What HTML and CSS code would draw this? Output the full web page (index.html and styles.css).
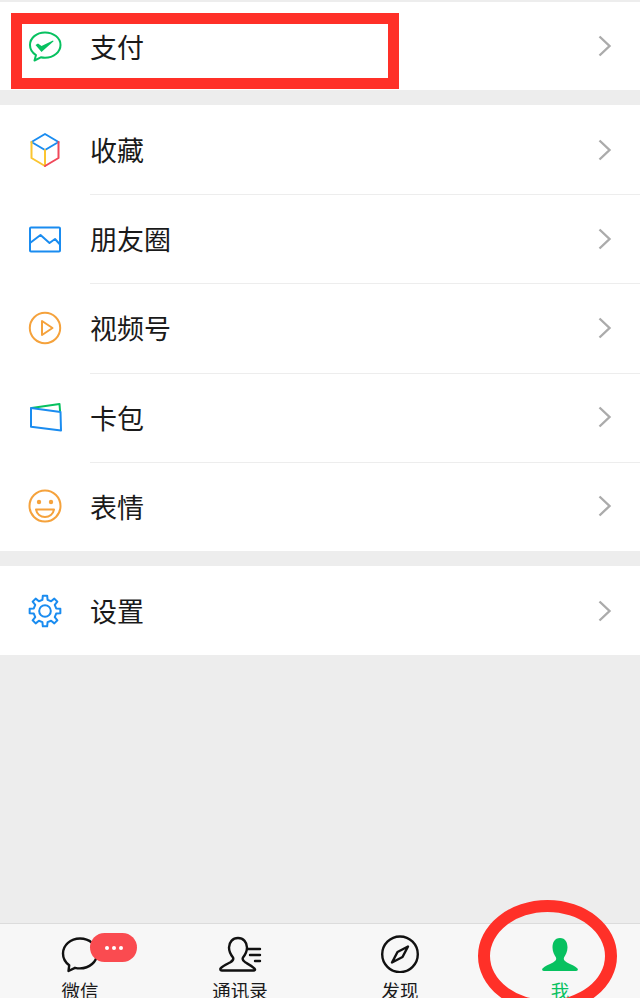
FILE: index.html
```html
<!DOCTYPE html>
<html lang="zh-CN">
<head>
  <meta charset="UTF-8" />
  <meta name="viewport" content="width=device-width, initial-scale=1.0"/>
  <title>我</title>
  <link rel="stylesheet" href="styles.css">
</head>
<body>
  <main class="content">
    <section class="group">
      <div class="row row-pay">
        <svg class="icon" viewBox="0 0 36 36">
          <path class="line green" d="M18 4.500C9.500 4.500 3 10 3 17c0 4.200 2.300 7.800 6 10.100L7.500 32.500l6.300-3.200c1.300.3 2.800.5 4.200.5 8.500 0 15.500-5.700 15.500-12.800S26.500 4.500 18 4.500Z"/>
          <path class="fill-green" d="M8.500 17l2.500-1.500 3.500 2.500L26 12.500l.6.700L14.500 24Z"/>
        </svg>
        <div class="row-body">
          <span>支付</span>
          <svg class="chevron" viewBox="0 0 16 24"><path d="M2.500 2.500l10 9.500-10 9.500"/></svg>
        </div>
      </div>
    </section>

    <section class="group">
      <div class="row">
        <svg class="icon" viewBox="0 0 36 36">
          <path class="line blue" d="M4.500 10L18 2l13.500 8L18 18Z"/>
          <path class="line yellow" d="M4.500 10v16L18 34V18"/>
          <path class="line red" d="M31.500 10v16L18 34"/>
        </svg>
        <div class="row-body">
          <span>收藏</span>
          <svg class="chevron" viewBox="0 0 16 24"><path d="M2.500 2.500l10 9.500-10 9.500"/></svg>
        </div>
      </div>
      <div class="row">
        <svg class="icon" viewBox="0 0 36 36">
          <rect class="line blue" x="3" y="6.500" width="30" height="24" rx="1"/>
          <path class="line blue" d="M3 22l10.500-8 9 8 5.500-4 5 5.500"/>
        </svg>
        <div class="row-body">
          <span>朋友圈</span>
          <svg class="chevron" viewBox="0 0 16 24"><path d="M2.500 2.500l10 9.500-10 9.500"/></svg>
        </div>
      </div>
      <div class="row">
        <svg class="icon" viewBox="0 0 36 36">
          <circle class="line orange" cx="18" cy="18" r="15.200"/>
          <path class="line orange" d="M15 11v14l10.500-7Z"/>
        </svg>
        <div class="row-body">
          <span>视频号</span>
          <svg class="chevron" viewBox="0 0 16 24"><path d="M2.500 2.500l10 9.500-10 9.500"/></svg>
        </div>
      </div>
      <div class="row">
        <svg class="icon" viewBox="0 0 36 36">
          <path class="line green" d="M4.500 9l28-4 .6 7.500"/>
          <path class="line blue" d="M4 9l29.500 4 .5 18.500L4 27.700Z"/>
        </svg>
        <div class="row-body">
          <span>卡包</span>
          <svg class="chevron" viewBox="0 0 16 24"><path d="M2.500 2.500l10 9.500-10 9.500"/></svg>
        </div>
      </div>
      <div class="row">
        <svg class="icon" viewBox="0 0 36 36">
          <circle class="line orange" cx="18" cy="18" r="15.500"/>
          <circle class="fill-orange" cx="12" cy="14" r="2.200"/>
          <circle class="fill-orange" cx="24" cy="14" r="2.200"/>
          <path class="line orange" d="M9 21.500h18c-.8 4.500-4.500 7.500-9 7.500s-8.200-3-9-7.500Z"/>
        </svg>
        <div class="row-body">
          <span>表情</span>
          <svg class="chevron" viewBox="0 0 16 24"><path d="M2.500 2.500l10 9.500-10 9.500"/></svg>
        </div>
      </div>
    </section>

    <section class="group">
      <div class="row">
        <svg class="icon" viewBox="0 0 36 36">
          <path class="line blue" d="M20.160 2.650L20.590 6.800L24.090 8.250L27.330 5.620L30.380 8.670L27.750 11.910L29.200 15.410L33.350 15.840V20.160L29.200 20.590L27.750 24.090L30.380 27.330L27.330 30.380L24.090 27.750L20.590 29.200L20.160 33.350H15.840L15.410 29.200L11.910 27.750L8.670 30.380L5.620 27.330L8.250 24.090L6.800 20.590L2.650 20.160V15.840L6.800 15.410L8.250 11.910L5.620 8.670L8.670 5.620L11.910 8.250L15.410 6.800L15.840 2.650Z"/>
          <circle class="line blue" cx="18" cy="18" r="5.800"/>
        </svg>
        <div class="row-body">
          <span>设置</span>
          <svg class="chevron" viewBox="0 0 16 24"><path d="M2.500 2.500l10 9.500-10 9.500"/></svg>
        </div>
      </div>
    </section>
  </main>

  <nav class="tabbar">
    <div class="tab">
      <svg class="tab-icon" viewBox="0 0 48 38">
        <path class="tab-line" d="M24 3.500C14.500 3.500 7 10.200 7 18.500c0 4.800 2.500 9 6.200 11.800L12.500 36l6.500-3.200c1.600.4 3.300.6 5 .6 9.500 0 17-6.700 17-15S33.500 3.500 24 3.500Z"/>
      </svg>
      <span>微信</span>
      <div class="badge"><i></i><i></i><i></i></div>
    </div>
    <div class="tab">
      <svg class="tab-icon" viewBox="0 0 48 38">
        <path class="tab-line" d="M22 3C16.500 3 13 7.500 13 12.500C13 17 15 20 17 22.500C18 24.500 16.500 26 14 27.500C10 29.500 6.500 31 4.500 33.500C4 35 5 35.500 6 35.500L37.500 35.500C39 35.500 39.500 34.500 38.500 33.500C36 31 33 29.500 29.500 27.500C27 26 26 24.500 27 22.500C29 20 31 17 31 12.500C31 7.500 27.500 3 22 3Z"/>
        <path class="tab-line" d="M32 14h12M34 20h10M39 26h5"/>
      </svg>
      <span>通讯录</span>
    </div>
    <div class="tab">
      <svg class="tab-icon" viewBox="0 0 48 38">
        <circle class="tab-line" cx="24" cy="19.300" r="17.800"/>
        <path class="tab-line" d="M32 11.500L21.500 17L16 27.500L26.500 22Z"/>
      </svg>
      <span>发现</span>
    </div>
    <div class="tab tab-active">
      <svg class="tab-icon" viewBox="0 0 48 38">
        <path class="fill-green" d="M24 3C18.500 3 16.500 7.500 16.500 12.500C16.500 17 18.500 20 20 22.500C20.800 24.500 19.500 26 17 27.500C13 29.500 9 31 6.500 33.500C5.500 35 6.500 36 8 36L40 36C41.500 36 42.500 35 41.500 33.500C39 31 35 29.500 31 27.500C28.500 26 27.200 24.500 28 22.500C29.500 20 31.500 17 31.500 12.500C31.500 7.500 29.500 3 24 3Z"/>
      </svg>
      <span>我</span>
    </div>
  </nav>

  <div class="mark-rect"></div>
  <div class="mark-ellipse"></div>
</body>
</html>
```

FILE: styles.css
```css
html, body {
  height: 100%;
}
body {
  position: relative;
  margin: 0;
  height: 998px;
  overflow: hidden;
  display: flex;
  flex-direction: column;
  background-color: #ededed;
  color: #1a1a1a;
  font-family: "Noto Sans CJK SC", "Noto Sans", sans-serif;
}
.content {
  flex: 1;
  padding-top: 2px;
}
.group {
  margin-bottom: 15px;
  background-color: #fff;
}
.row {
  display: flex;
  align-items: center;
  height: 89.2px;
  padding-left: 27px;
  font-size: 27px;
}
.row-pay {
  height: 88px;
}
.icon {
  flex: none;
  width: 36px;
  height: 36px;
  margin-right: 27px;
}
.row-body {
  flex: 1;
  align-self: stretch;
  display: flex;
  align-items: center;
  justify-content: space-between;
  padding-right: 27px;
  box-shadow: 0 1px 0 #ededed;
}
.row:last-child .row-body {
  box-shadow: none;
}
.chevron {
  width: 16px;
  height: 24px;
  fill: none;
  stroke: #ababab;
  stroke-width: 2.4;
}
.line {
  fill: none;
  stroke-width: 2;
  stroke-linejoin: round;
  stroke-linecap: round;
}
.green { stroke: #07c160; }
.blue { stroke: #1a8cf0; }
.orange { stroke: #f5a23c; }
.yellow { stroke: #fbc531; }
.red { stroke: #f0485a; }
.fill-green { fill: #07c160; }
.fill-orange { fill: #f5a23c; }

.tabbar {
  display: grid;
  grid-template-columns: repeat(4, 1fr);
  height: 75px;
  box-sizing: border-box;
  padding-top: 11px;
  background-color: #f7f7f7;
  border-top: 1px solid #dcdcdc;
}
.tab {
  position: relative;
  display: flex;
  flex-direction: column;
  align-items: center;
  font-size: 18.5px;
  line-height: 20px;
  color: #1a1a1a;
}
.tab-active {
  color: #07c160;
}
.tab-icon {
  width: 48px;
  height: 38px;
  margin-bottom: 7px;
}
.tab-line {
  fill: none;
  stroke: #111;
  stroke-width: 2.4;
  stroke-linejoin: round;
  stroke-linecap: round;
}
.badge {
  position: absolute;
  left: 90px;
  top: -2px;
  display: flex;
  align-items: center;
  justify-content: center;
  gap: 3px;
  width: 47px;
  height: 29px;
  border-radius: 15px;
  background-color: #fa4b50;
}
.badge i {
  width: 4px;
  height: 4px;
  border-radius: 50%;
  background-color: #fff;
}

/* red annotations drawn over the screenshot */
.mark-rect {
  position: absolute;
  left: 11px;
  top: 13px;
  width: 388px;
  height: 76px;
  box-sizing: border-box;
  border: 11.5px solid #ff3028;
}
.mark-ellipse {
  position: absolute;
  left: 478px;
  top: 900px;
  width: 139px;
  height: 112px;
  box-sizing: border-box;
  border: 12px solid #ff3028;
  border-radius: 50%;
}
```
